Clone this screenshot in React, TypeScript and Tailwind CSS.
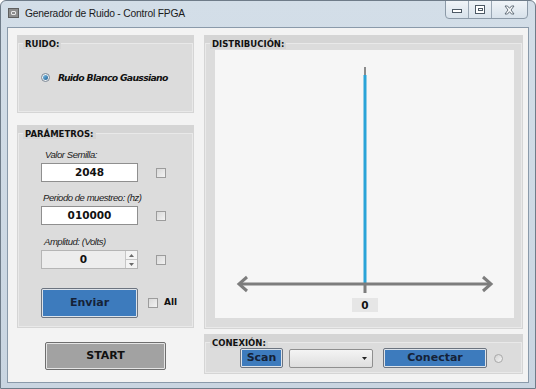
import React from 'react'

const titleFont = { fontFamily: '"DejaVu Sans", Verdana, sans-serif' }

function Group({ title, className, children }: { title: string; className?: string; children?: React.ReactNode }) {
  return (
    <div className={`bg-[#d5d5d5] flex flex-col ${className ?? ''}`}>
      <div className="h-[8px] pl-[6px] pt-[2px] leading-[9px] shrink-0">
        <span className="relative z-10 bg-[#d5d5d5] px-[2px] text-[8.5px] font-bold text-[#111]" style={titleFont}>
          {title}
        </span>
      </div>
      <div className="flex-1 mx-px mb-px border border-[#e9e9e9] bg-[#dcdcdc] flex flex-col min-h-0">{children}</div>
    </div>
  )
}

function CheckBox() {
  return <div className="w-[10px] h-[10px] border border-[#9c9c9c] bg-gradient-to-br from-[#d9d9d9] to-[#f2f2f2]" />
}

function TextField({ value, spin }: { value: string; spin?: boolean }) {
  return (
    <div
      className={`w-[97px] h-[19px] border border-[#8f8f8f] flex items-center ${spin ? 'bg-[#ededed] border-[#b5b5b5]' : 'bg-white'}`}
    >
      <span className="flex-1 text-center text-[10.5px] font-bold text-[#111] leading-none" style={titleFont}>
        {value}
      </span>
      {spin && (
        <div className="w-[12px] h-full flex flex-col border-l border-[#c6c6c6]">
          <div className="flex-1 flex items-center justify-center border-b border-[#c6c6c6] bg-[#f4f4f4]">
            <svg width="5" height="3" viewBox="0 0 5 3">
              <path d="M0 3 L2.5 0 L5 3 Z" fill="#6a6a6a" />
            </svg>
          </div>
          <div className="flex-1 flex items-center justify-center bg-[#f4f4f4]">
            <svg width="5" height="3" viewBox="0 0 5 3">
              <path d="M0 0 L2.5 3 L5 0 Z" fill="#6a6a6a" />
            </svg>
          </div>
        </div>
      )}
    </div>
  )
}

function BlueButton({ label, className }: { label: string; className: string }) {
  return (
    <div className={`border border-[#6c7480] p-px bg-[#dde3ea] rounded-[2px] ${className}`}>
      <div
        className="w-full h-full bg-[#3d7bbd] flex items-center justify-center text-[11px] font-bold text-[#152238]"
        style={titleFont}
      >
        {label}
      </div>
    </div>
  )
}

function Label({ text, className }: { text: string; className?: string }) {
  return (
    <div
      className={`text-[9.5px] italic text-[#222] leading-[11px] tracking-[-0.45px] ${className ?? ''}`}
      style={{ fontFamily: '"Liberation Sans", Arial, sans-serif' }}
    >
      {text}
    </div>
  )
}

function Chart() {
  return (
    <svg width="299" height="268" viewBox="0 0 299 268">
      <line x1="150" y1="25" x2="150" y2="234" stroke="#2aa4d8" strokeWidth="3" />
      <line x1="150" y1="17" x2="150" y2="25" stroke="#8b8b8b" strokeWidth="2" />
      <line x1="24" y1="234" x2="276" y2="234" stroke="#7d7d7d" strokeWidth="3" />
      <polyline points="32,227 24,234 32,241" fill="none" stroke="#7d7d7d" strokeWidth="3" />
      <polyline points="268,227 276,234 268,241" fill="none" stroke="#7d7d7d" strokeWidth="3" />
      <line x1="150" y1="235" x2="150" y2="243" stroke="#7d7d7d" strokeWidth="3" />
      <rect x="137" y="248" width="26" height="14" fill="#e6e6e6" />
      <text
        x="150"
        y="259"
        textAnchor="middle"
        fontSize="10.5"
        fontWeight="bold"
        fill="#111"
        fontFamily='"DejaVu Sans", Verdana, sans-serif'
      >
        0
      </text>
    </svg>
  )
}

export default function App() {
  return (
    <div className="w-[536px] h-[389px] bg-gradient-to-b from-[#d3dee8] to-[#c9d5e1] border border-[#6f7c89] rounded-t-[6px] flex flex-col overflow-hidden relative">
      {/* Title bar */}
      <div className="h-[26px] shrink-0 flex items-start relative">
        <div className="mt-[7px] ml-[7px] w-[11px] h-[10px] bg-[#8d8d8d] border border-[#5f5f5f] flex items-center justify-center">
          <div className="w-[5px] h-[4px] border border-[#e8e8e8] rounded-[1px]" />
        </div>
        <span
          className="ml-[6px] mt-[7px] text-[10.3px] text-[#1b1b1b] leading-[12px] tracking-[-0.2px]"
          style={{ fontFamily: '"Liberation Sans", Arial, sans-serif' }}
        >
          Generador de Ruido - Control FPGA
        </span>
        <div className="absolute right-[7px] top-[-1px] flex h-[19px] border border-[#8c9aa8] rounded-b-[4px] overflow-hidden bg-gradient-to-b from-[#f0f4f8] to-[#d8e2eb]">
          <div className="w-[23px] flex items-center justify-center border-r border-[#9aa7b4]">
            <div className="w-[10px] h-[4px] border border-[#4d5965] mt-[3px] bg-white" />
          </div>
          <div className="w-[23px] flex items-center justify-center border-r border-[#9aa7b4]">
            <div className="w-[10px] h-[9px] border border-[#4d5965] flex items-center justify-center bg-white">
              <div className="w-[5px] h-[3px] border border-[#4d5965]" />
            </div>
          </div>
          <div className="w-[35px] flex items-center justify-center">
            <svg width="11" height="10" viewBox="0 0 11 10">
              <path
                d="M1 1 L3.5 1 L5.5 3.3 L7.5 1 L10 1 L7 5 L10 9 L7.5 9 L5.5 6.7 L3.5 9 L1 9 L4 5 Z"
                fill="#fbfcfd"
                stroke="#56626e"
                strokeWidth="0.9"
              />
            </svg>
          </div>
        </div>
      </div>

      {/* Client area */}
      <div className="flex-1 mx-[6px] mb-[5px] border border-[#8a9aaa] bg-[#f3f3f3] flex gap-[10px] pl-[9px] pr-[5px] pt-[7px]">
        {/* Left column */}
        <div className="w-[177px] flex flex-col">
          <Group title="RUIDO:" className="h-[78px]">
            <div className="flex items-center pl-[22px] pt-[29px] gap-[8px]">
              <div className="w-[9px] h-[9px] rounded-full border border-[#7b8794] bg-[#eef2f5] flex items-center justify-center">
                <div className="w-[5px] h-[5px] rounded-full bg-gradient-to-br from-[#7fc3ea] to-[#1f5f92]" />
              </div>
              <span
                className="text-[9.3px] font-bold italic text-[#111] tracking-[-0.7px] leading-none"
                style={titleFont}
              >
                Ruido Blanco Gaussiano
              </span>
            </div>
          </Group>

          <Group title="PARÁMETROS:" className="h-[203px] mt-[12px]">
            <div className="flex flex-col pl-[22px] pt-[15px]">
              <Label text="Valor Semilla:" className="pl-[4px]" />
              <div className="flex items-center mt-[3px] gap-[18px]">
                <TextField value="2048" />
                <CheckBox />
              </div>
              <Label text="Periodo de muestreo: (hz)" className="pl-[2px] mt-[10px]" />
              <div className="flex items-center mt-[3px] gap-[18px]">
                <TextField value="010000" />
                <CheckBox />
              </div>
              <Label text="Amplitud: (Volts)" className="pl-[3px] mt-[11px]" />
              <div className="flex items-center mt-[3px] gap-[18px]">
                <TextField value="0" spin />
                <CheckBox />
              </div>
              <div className="flex items-center mt-[19px]">
                <BlueButton label="Enviar" className="w-[97px] h-[30px]" />
                <div className="ml-[10px]">
                  <CheckBox />
                </div>
                <span className="ml-[6px] text-[9px] font-bold text-[#111]" style={titleFont}>
                  All
                </span>
              </div>
            </div>
          </Group>

          <div className="self-center mt-[14px] w-[121px] h-[28px] border border-[#6e6e6e] p-px bg-[#e4e4e4] rounded-[2px]">
            <div
              className="w-full h-full bg-[#a2a2a2] flex items-center justify-center text-[11px] font-bold text-[#111]"
              style={titleFont}
            >
              START
            </div>
          </div>
        </div>

        {/* Right column */}
        <div className="w-[319px] flex flex-col">
          <Group title="DISTRIBUCIÓN:" className="h-[294px]">
            <div className="pl-[9px] pt-[6px]">
              <div className="w-[299px] h-[268px] bg-[#f6f6f6]">
                <Chart />
              </div>
            </div>
          </Group>

          <Group title="CONEXIÓN:" className="h-[40px] mt-[5px]">
            <div className="flex items-center pl-[34px] pt-[5px]">
              <BlueButton label="Scan" className="w-[43px] h-[20px]" />
              <div className="ml-[6px] w-[84px] h-[19px] border border-[#8f8f8f] rounded-[2px] bg-gradient-to-b from-[#f4f4f4] to-[#dedede] flex items-center justify-end pr-[5px]">
                <svg width="5" height="3" viewBox="0 0 5 3">
                  <path d="M0 0 L5 0 L2.5 3 Z" fill="#222" />
                </svg>
              </div>
              <BlueButton label="Conectar" className="ml-[10px] w-[104px] h-[20px]" />
              <div className="ml-[7px] w-[9px] h-[9px] rounded-full border border-[#a8a8a8] bg-gradient-to-br from-[#d2d2d2] to-[#f4f4f4]" />
            </div>
          </Group>
        </div>
      </div>
    </div>
  )
}
